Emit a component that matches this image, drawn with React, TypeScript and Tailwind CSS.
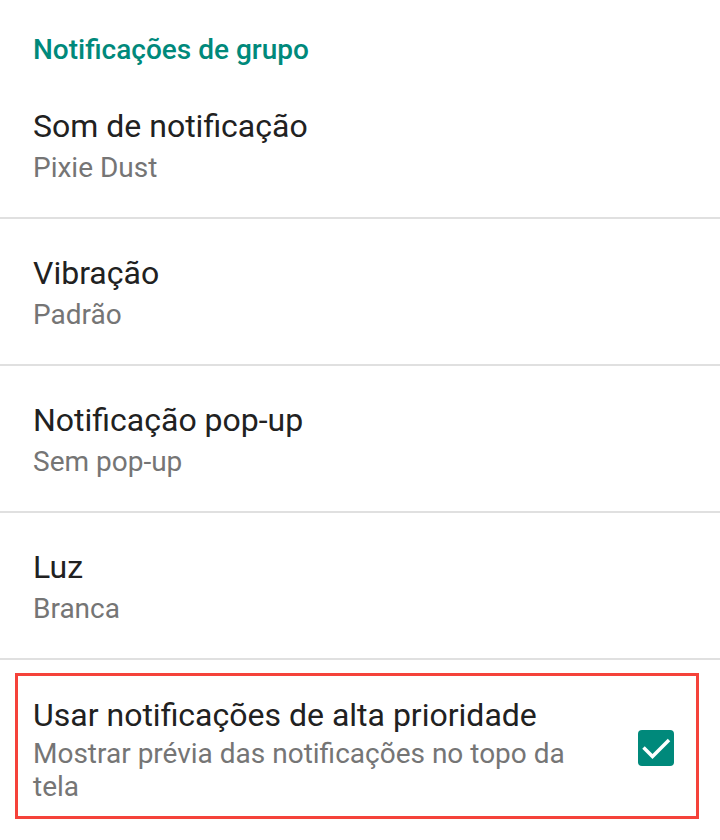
const rows = [
  { title: "Som de notificação", subtitle: "Pixie Dust" },
  { title: "Vibração", subtitle: "Padrão" },
  { title: "Notificação pop-up", subtitle: "Sem pop-up" },
  { title: "Luz", subtitle: "Branca" },
];

export default function App() {
  return (
    <div className="w-[720px] h-[840px] bg-white overflow-hidden font-['Roboto',sans-serif]">
      <div className="px-[33px] pt-[34px] pb-[6px] text-[28px] font-medium text-[#00897b] leading-[32px]">
        Notificações de grupo
      </div>

      {rows.map((row) => (
        <div key={row.title} className="border-b-2 border-[#e0e0e0]">
          <div className="px-[33px] pt-[34px] pb-[27px]">
            <div className="text-[32px] leading-[40px] text-[#212121]">{row.title}</div>
            <div className="text-[28px] leading-[44px] text-[#757575]">{row.subtitle}</div>
          </div>
        </div>
      ))}

      {/* item em destaque */}
      <div className="ml-[15px] mr-[21px] mt-[13px] border-[3px] border-[#f5423a] flex items-center justify-between pl-[15px] pr-[22px] pt-[17px] pb-[13px]">
        <div className="w-[560px]">
          <div className="text-[32px] leading-[44px] text-[#212121]">Usar notificações de alta prioridade</div>
          <div className="text-[28px] leading-[33px] text-[#757575]">
            Mostrar prévia das notificações no topo da tela
          </div>
        </div>
        <div className="w-[36px] h-[36px] rounded-[4px] bg-[#00897b] flex items-center justify-center">
          <svg viewBox="0 0 36 36" className="w-[36px] h-[36px]">
            <polyline points="5.5,17.5 14.5,26.5 31,10" fill="none" stroke="white" strokeWidth={3.5} />
          </svg>
        </div>
      </div>
    </div>
  );
}
